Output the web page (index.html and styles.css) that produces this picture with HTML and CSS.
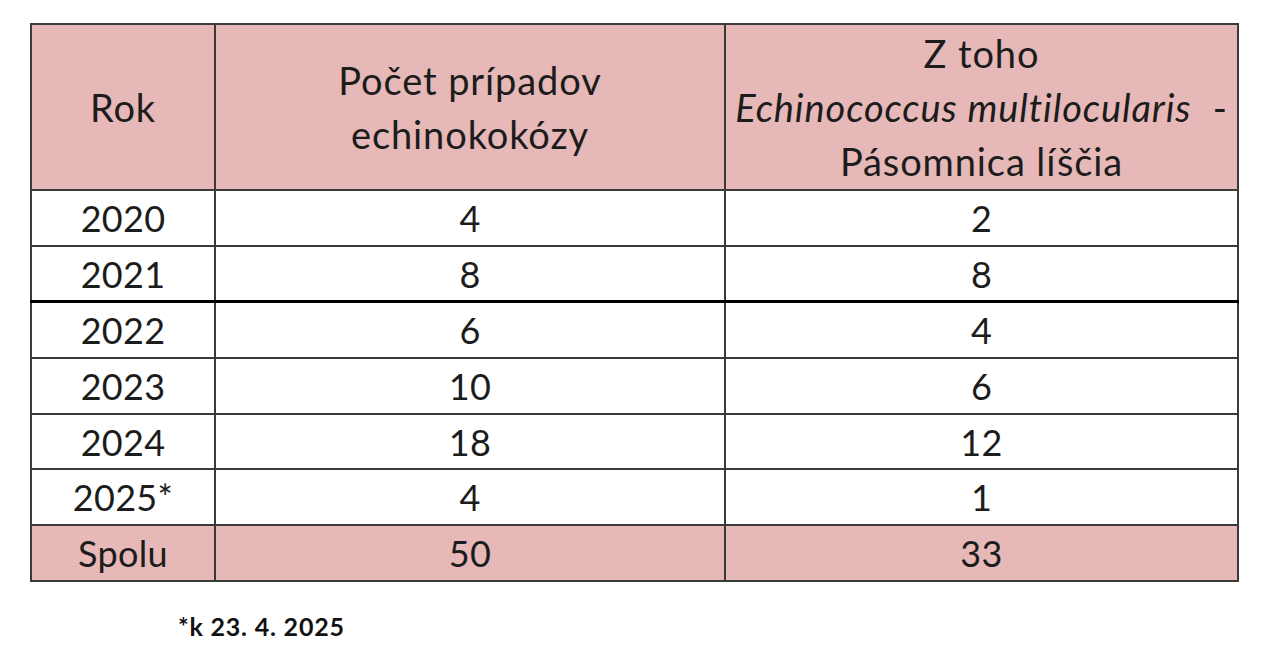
FILE: index.html
```html
<!DOCTYPE html>
<html lang="sk">
<head>
<meta charset="utf-8">
<title>Echinokokóza</title>
<link rel="stylesheet" href="styles.css">
</head>
<body>
<div class="page">
  <table class="stats">
    <colgroup>
      <col class="c-year">
      <col class="c-count">
      <col class="c-sub">
    </colgroup>
    <thead>
      <tr class="head">
        <th>Rok</th>
        <th>Počet prípadov<br>echinokokózy</th>
        <th>Z toho<br><span class="nowrap"><em>Echinococcus multilocularis</em>&nbsp; -</span><br>Pásomnica líščia</th>
      </tr>
    </thead>
    <tbody>
      <tr><td>2020</td><td>4</td><td>2</td></tr>
      <tr class="thick"><td>2021</td><td>8</td><td>8</td></tr>
      <tr><td>2022</td><td>6</td><td>4</td></tr>
      <tr><td>2023</td><td>10</td><td>6</td></tr>
      <tr><td>2024</td><td>18</td><td>12</td></tr>
      <tr><td>2025*</td><td>4</td><td>1</td></tr>
      <tr class="total"><td>Spolu</td><td>50</td><td>33</td></tr>
    </tbody>
  </table>
  <p class="note">*k 23. 4. 2025</p>
</div>
</body>
</html>
```
FILE: styles.css
```css
html, body {
  margin: 0;
  padding: 0;
  background: #ffffff;
}

body {
  font-family: Lato, "Open Sans", sans-serif;
  color: #1c1c1c;
}

.page {
  padding: 23px 0 0 30px;
}

.stats {
  border-collapse: collapse;
  table-layout: fixed;
  width: 1207px;
  font-size: 36px;
}

.c-year { width: 184px; }
.c-count { width: 510px; }
.c-sub { width: 513px; }

.stats th,
.stats td {
  border: 2px solid #3a3a3a;
  text-align: center;
  vertical-align: middle;
  padding: 0;
  font-weight: normal;
}

.stats td {
  height: 53.7px;
  line-height: 50px;
  letter-spacing: 0.3px;
}

.head th {
  background: #e6b8b7;
  height: 164px;
  font-size: 38px;
  line-height: 54px;
  letter-spacing: 0.9px;
}

.nowrap {
  white-space: nowrap;
}

.thick td {
  border-bottom: 3px solid #000000;
}

.total td {
  background: #e6b8b7;
}

.note {
  margin: 29px 0 0 148px;
  font-size: 25px;
  font-weight: bold;
  color: #111111;
  letter-spacing: 0.8px;
}
```
